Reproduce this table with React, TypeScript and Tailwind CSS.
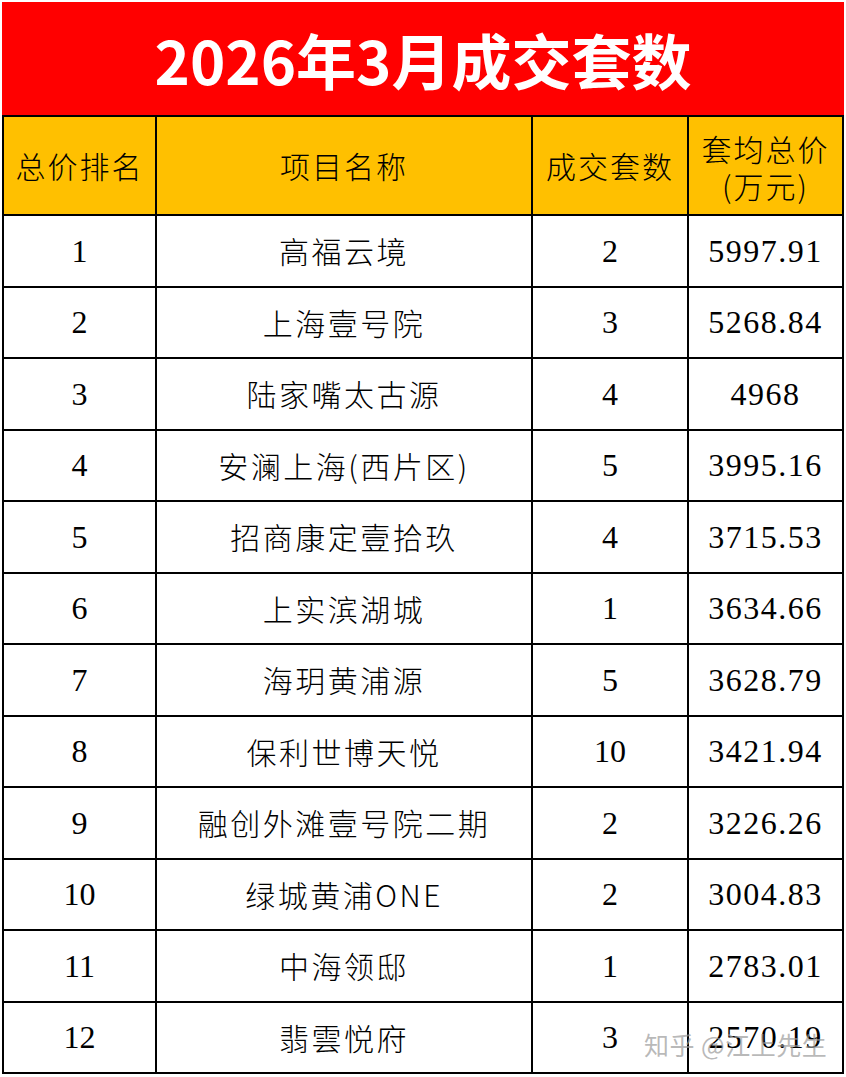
const rows = [
  { rank: "1", name: "高福云境", count: "2", price: "5997.91" },
  { rank: "2", name: "上海壹号院", count: "3", price: "5268.84" },
  { rank: "3", name: "陆家嘴太古源", count: "4", price: "4968" },
  { rank: "4", name: "安澜上海(西片区)", count: "5", price: "3995.16" },
  { rank: "5", name: "招商康定壹拾玖", count: "4", price: "3715.53" },
  { rank: "6", name: "上实滨湖城", count: "1", price: "3634.66" },
  { rank: "7", name: "海玥黄浦源", count: "5", price: "3628.79" },
  { rank: "8", name: "保利世博天悦", count: "10", price: "3421.94" },
  { rank: "9", name: "融创外滩壹号院二期", count: "2", price: "3226.26" },
  { rank: "10", name: "绿城黄浦ONE", count: "2", price: "3004.83" },
  { rank: "11", name: "中海领邸", count: "1", price: "2783.01" },
  { rank: "12", name: "翡雲悦府", count: "3", price: "2570.19" },
];

const cjk = "font-['Noto_Sans_CJK_SC',sans-serif]";
const num = "font-['Liberation_Serif','Noto_Sans_CJK_SC',serif]";

function Cell({ children, className = "" }: { children: React.ReactNode; className?: string }) {
  return (
    <div className={`flex items-center justify-center text-black ${className}`}>
      {children}
    </div>
  );
}

export default function App() {
  return (
    <div className="relative w-[846px] h-[1077px] bg-white px-[2px] pt-[2px]">
      <div
        className={`h-[113px] bg-[#ff0000] flex items-center justify-center text-white text-[60px] font-bold ${cjk}`}
      >
        2026年3月成交套数
      </div>
      <div className="grid grid-cols-[151px_374px_154px_153px] grid-rows-[97px_repeat(12,69.5px)] gap-[2px] border-2 border-black bg-black">
        <Cell className={`bg-[#ffc000] text-[30px] font-light tracking-[2px] ${cjk}`}>总价排名</Cell>
        <Cell className={`bg-[#ffc000] text-[30px] font-light tracking-[2px] ${cjk}`}>项目名称</Cell>
        <Cell className={`bg-[#ffc000] text-[30px] font-light tracking-[2px] ${cjk}`}>成交套数</Cell>
        <Cell className={`bg-[#ffc000] text-[30px] font-light tracking-[2px] leading-[37px] flex-col pt-[2px] ${cjk}`}>
          <span>套均总价</span>
          <span>(万元)</span>
        </Cell>
        {rows.map((r) => (
          <>
            <Cell key={`rank-${r.rank}`} className={`bg-white text-[32px] ${num}`}>
              {r.rank}
            </Cell>
            <Cell key={`name-${r.rank}`} className={`bg-white text-[30px] font-light tracking-[2.5px] ${cjk}`}>
              {r.name}
            </Cell>
            <Cell key={`count-${r.rank}`} className={`bg-white text-[32px] ${num}`}>
              {r.count}
            </Cell>
            <Cell key={`price-${r.rank}`} className={`bg-white text-[32px] tracking-[1.5px] ${num}`}>
              {r.price}
            </Cell>
          </>
        ))}
      </div>
      <div
        className={`absolute left-[644px] top-[1026px] text-[25px] tracking-[0.5px] text-[#9a9a9a]/70 ${cjk}`}
      >
        知乎 @江上先生
      </div>
    </div>
  );
}
